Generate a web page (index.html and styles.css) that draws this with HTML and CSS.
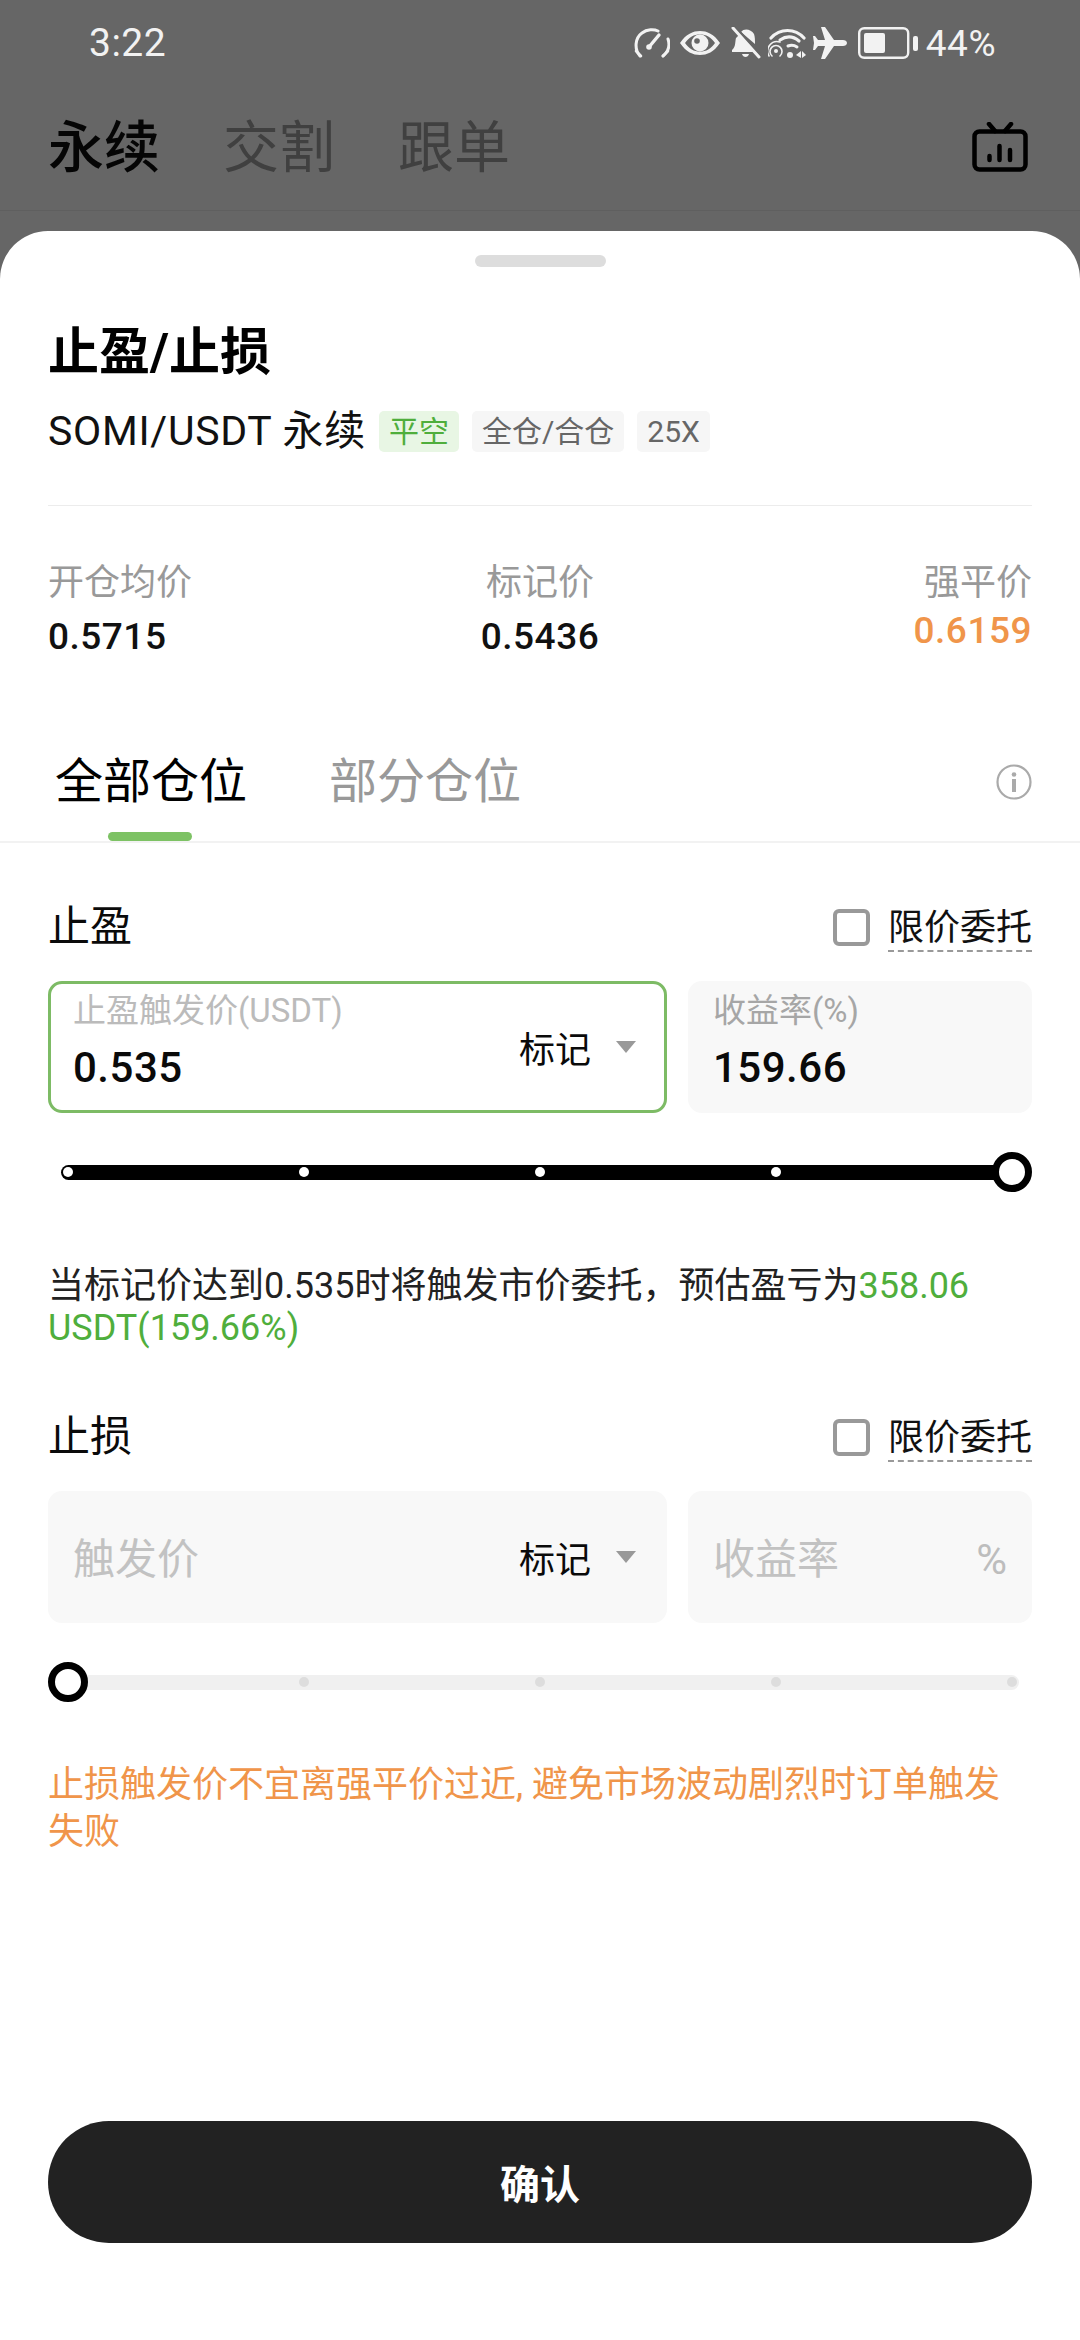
FILE: index.html
```html
<!DOCTYPE html>
<html>
<head>
  <meta charset="utf-8" />
  <title>止盈/止损</title>
  <link rel="stylesheet" href="styles.css">
</head>
<body>

<div class="page">

  <div class="backdrop">
    <div class="statusbar">
      <span class="clock">3:22</span>
      <div class="status-icons">
        <!-- speed gauge -->
        <svg class="ic-gauge" viewBox="0 0 36 32" fill="none" stroke="#f2f2f2" stroke-width="3" stroke-linecap="round">
          <path d="M6 29 C0 22 1 11 8 6 C13 2 20 2 24 4"/>
          <path d="M29 29 C35 24 36 18 34 12"/>
          <path d="M15 20 L25 8" stroke-width="3.4"/>
          <path d="M2 24 L7 29 M34 24 L29 29" stroke-width="2.6"/>
          <circle cx="15" cy="20" r="2.8" fill="#f2f2f2" stroke="none"/>
        </svg>
        <!-- eye -->
        <svg class="ic-eye" viewBox="0 0 40 24">
          <path fill="#f2f2f2" fill-rule="evenodd" d="M0 12 C6 3 13 0 20 0 C27 0 34 3 40 12 C34 21 27 24 20 24 C13 24 6 21 0 12 Z M5 12 C9 18 14 20.500 20 20.500 C26 20.500 31 18 35 12 C31 6 26 3.500 20 3.500 C14 3.500 9 6 5 12 Z"/>
          <circle cx="20" cy="12" r="8.500" fill="#f2f2f2"/>
          <circle cx="17" cy="10" r="2.800" fill="#666"/>
        </svg>
        <!-- muted bell -->
        <svg class="ic-bell" viewBox="0 0 30 32">
          <path fill="#f2f2f2" d="M8 8 L22 22 L24 25 L1 25 L1 23 C5 20 4 14 5 11 Z M10 5 C13 1 20 2 23 7 C24 10 24 13 24 17 Z M11 27 L18 27 C17 31 12 31 11 27 Z"/>
          <path d="M2 1 L28 30" stroke="#f2f2f2" stroke-width="3" stroke-linecap="round"/>
          <path d="M5 0 L30 28" stroke="#666" stroke-width="1.500"/>
        </svg>
        <!-- wifi with hotspot mark -->
        <svg class="ic-wifi" viewBox="0 0 38 32" fill="none" stroke="#f2f2f2" stroke-linecap="round">
          <path d="M3 11 C12 1 27 1 36 11" stroke-width="3.200"/>
          <path d="M12 13 C18 9 25 9 31 14" stroke-width="3.200"/>
          <path d="M20 19 C23 18 26 18 29 20" stroke-width="3"/>
          <circle cx="8" cy="24" r="2" fill="#f2f2f2" stroke="none"/>
          <path d="M4 29 A6 6 0 1 1 12 29 M1 29 A9.500 9.500 0 0 1 12 15" stroke-width="1.600"/>
          <circle cx="22" cy="28" r="3" fill="#f2f2f2" stroke="none"/>
          <path fill="#f2f2f2" stroke="none" d="M33 24 L33 31 L28 28 Z M34 24 L38 28 L34 31 Z"/>
        </svg>
        <!-- airplane -->
        <svg class="ic-plane" viewBox="0 0 34 32">
          <path fill="#f2f2f2" d="M34 16 C34 18 32 19 30 19 L21 19 L12 32 L8 32 L12 19 L5 19 L2 23 L0 23 L1 16 L0 9 L2 9 L5 13 L12 13 L8 0 L12 0 L21 13 L30 13 C32 13 34 14 34 16 Z"/>
        </svg>
        <!-- battery -->
        <svg class="ic-battery" viewBox="0 0 60 32">
          <rect x="1.200" y="1.200" width="49" height="29.600" rx="5" fill="none" stroke="#f2f2f2" stroke-width="2.400"/>
          <rect x="6" y="6" width="21" height="20" rx="2" fill="#f2f2f2"/>
          <rect x="55" y="9" width="5" height="15" rx="2" fill="#f2f2f2"/>
        </svg>
        <span class="battery-pct">44%</span>
      </div>
    </div>

    <div class="market-nav">
      <span class="market-tab current">永续</span>
      <span class="market-tab">交割</span>
      <span class="market-tab">跟单</span>
      <svg class="ic-tv" viewBox="0 0 56 50" fill="none" stroke="#000" stroke-width="4.500" stroke-linecap="round" stroke-linejoin="round">
        <rect x="2.500" y="9.500" width="51" height="38" rx="5"/>
        <path d="M17 2 L23 9 M39 2 L33 9"/>
        <path d="M17.500 34 V38 M27.500 24 V38 M38 28 V38"/>
      </svg>
    </div>
  </div>

  <div class="sheet">
    <div class="handle"></div>

    <div class="sheet-head">
      <h1 class="title">止盈/止损</h1>
      <div class="pair-row">
        <span class="pair">SOMI/USDT 永续</span>
        <span class="tag tag-green">平空</span>
        <span class="tag">全仓/合仓</span>
        <span class="tag">25X</span>
      </div>
      <div class="rule"></div>
      <div class="stats">
        <div class="stat">
          <div class="stat-label">开仓均价</div>
          <div class="stat-value">0.5715</div>
        </div>
        <div class="stat stat-mid">
          <div class="stat-label">标记价</div>
          <div class="stat-value">0.5436</div>
        </div>
        <div class="stat stat-end">
          <div class="stat-label">强平价</div>
          <div class="stat-value stat-liq">0.6159</div>
        </div>
      </div>
    </div>

    <div class="tabs">
      <span class="tab active">全部仓位</span>
      <span class="tab">部分仓位</span>
      <svg class="ic-info" viewBox="0 0 36 36">
        <circle cx="18" cy="18" r="16.500" fill="none" stroke="#aaa" stroke-width="2.200"/>
        <circle cx="18" cy="10.500" r="2.300" fill="#aaa"/>
        <rect x="16" y="15" width="4" height="13" fill="#aaa"/>
      </svg>
    </div>

    <div class="form">
      <div class="section-head">
        <span class="section-title">止盈</span>
        <label class="limit-check"><span class="checkbox"></span><span class="limit-text">限价委托</span></label>
      </div>
      <div class="inputs">
        <div class="field field-price focused">
          <div class="field-main">
            <div class="field-label light">止盈触发价(USDT)</div>
            <div class="field-value">0.535</div>
          </div>
          <div class="select"><span>标记</span><i class="caret"></i></div>
        </div>
        <div class="field field-rate">
          <div class="field-main">
            <div class="field-label">收益率(%)</div>
            <div class="field-value">159.66</div>
          </div>
        </div>
      </div>
      <div class="slider">
        <div class="track full">
          <i class="dot"></i><i class="dot"></i><i class="dot"></i><i class="dot"></i><i class="dot"></i>
        </div>
        <span class="thumb thumb-end"></span>
      </div>
      <p class="note">当标记价达到0.535时将触发市价委托，预估盈亏为<span class="green">358.06</span> <span class="green">USDT(159.66%)</span></p>

      <div class="section-head second">
        <span class="section-title">止损</span>
        <label class="limit-check"><span class="checkbox"></span><span class="limit-text">限价委托</span></label>
      </div>
      <div class="inputs">
        <div class="field field-price">
          <div class="placeholder">触发价</div>
          <div class="select"><span>标记</span><i class="caret"></i></div>
        </div>
        <div class="field field-rate">
          <div class="placeholder">收益率</div>
          <span class="percent">%</span>
        </div>
      </div>
      <div class="slider">
        <div class="track">
          <i class="dot"></i><i class="dot"></i><i class="dot"></i><i class="dot"></i><i class="dot"></i>
        </div>
        <span class="thumb thumb-start"></span>
      </div>
      <p class="warning">止损触发价不宜离强平价过近, 避免市场波动剧烈时订单触发失败</p>
    </div>

    <button class="confirm">确认</button>
  </div>

</div>

</body>
</html>
```

FILE: styles.css
```css
* {
  box-sizing: border-box;
}

html, body {
  margin: 0;
  padding: 0;
}

body {
  background: #666;
  font-family: Roboto, "Noto Sans CJK SC", sans-serif;
  color: #111;
}

.page {
  width: 1080px;
  height: 2340px;
  display: flex;
  flex-direction: column;
  overflow: hidden;
}

/* dimmed screen behind the sheet */
.backdrop {
  height: 231px;
  flex: none;
  background: #666;
}

.statusbar {
  height: 86px;
  padding: 0 84px 0 89px;
  display: flex;
  align-items: center;
  justify-content: space-between;
  color: #f2f2f2;
}

.clock {
  font-size: 39px;
  letter-spacing: 0.5px;
}

.status-icons {
  display: flex;
  align-items: center;
}

.status-icons svg {
  display: block;
  flex: none;
}

.ic-gauge { width: 36px; height: 32px; margin-right: 10px; }
.ic-eye { width: 40px; height: 24px; margin-right: 11px; }
.ic-bell { width: 30px; height: 32px; margin-right: 7px; }
.ic-wifi { width: 38px; height: 32px; margin-right: 7px; }
.ic-plane { width: 34px; height: 32px; margin-right: 11px; }
.ic-battery { width: 60px; height: 32px; margin-right: 8px; }

.battery-pct {
  font-size: 37px;
  letter-spacing: 0.5px;
}

.market-nav {
  height: 125px;
  padding: 0 52px 0 48px;
  display: flex;
  align-items: center;
  border-bottom: 1px solid #5f5f5f;
}

.market-tab {
  font-size: 56px;
  line-height: 70px;
  margin-right: 63px;
  color: #404040;
}

.market-tab.current {
  color: #050505;
  font-weight: 500;
}

.ic-tv {
  width: 56px;
  height: 50px;
  margin-left: auto;
  margin-top: -3px;
}

/* bottom sheet */
.sheet {
  flex: 1;
  background: #fff;
  border-radius: 48px 48px 0 0;
  display: flex;
  flex-direction: column;
}

.handle {
  width: 131px;
  height: 12px;
  margin: 24px auto 0;
  border-radius: 6px;
  background: #ddd;
}

.sheet-head {
  padding: 0 48px;
}

.title {
  margin: 54px 0 0;
  font-size: 51px;
  line-height: 64px;
  font-weight: 700;
  color: #000;
}

.pair-row {
  margin-top: 26px;
  height: 41px;
  display: flex;
  align-items: center;
}

.pair {
  font-size: 41px;
  line-height: 41px;
  color: #111;
  margin-right: 13px;
  letter-spacing: 0.7px;
}

.tag {
  height: 41px;
  padding: 0 10px;
  margin-right: 13px;
  border-radius: 5px;
  background: #f6f6f6;
  color: #666;
  font-size: 30px;
  line-height: 41px;
}

.tag-green {
  background: #e8f6e4;
  color: #4fae3c;
}

.rule {
  height: 1px;
  margin-top: 53px;
  background: #ececec;
}

.stats {
  margin-top: 55px;
  display: grid;
  grid-template-columns: 1fr auto 1fr;
}

.stat-mid {
  text-align: center;
}

.stat-end {
  text-align: right;
}

.stat-label {
  font-size: 36px;
  line-height: 44px;
  color: #999;
}

.stat-value {
  margin-top: 10px;
  font-size: 37px;
  line-height: 44px;
  color: #111;
  font-weight: 500;
  letter-spacing: 0.5px;
}

.stat-liq {
  margin-top: 4px;
  color: #f0954a;
}

.tabs {
  position: relative;
  margin-top: 93px;
  padding: 0 48px 29px 55px;
  display: flex;
  align-items: center;
  gap: 82px;
  border-bottom: 2px solid #f2f2f2;
}

.tab {
  position: relative;
  font-size: 48px;
  line-height: 60px;
  color: #999;
}

.tab.active {
  color: #000;
}

/* green bar sits on the tab strip's bottom line */
.tab.active::after {
  content: "";
  position: absolute;
  left: 53px;
  bottom: -29px;
  width: 84px;
  height: 9px;
  border-radius: 5px;
  background: #7dc264;
}

.ic-info {
  width: 36px;
  height: 36px;
  margin-left: auto;
}

.form {
  padding: 0 48px;
}

.section-head {
  margin-top: 62px;
  height: 44px;
  display: flex;
  align-items: center;
  justify-content: space-between;
}

.section-head.second {
  margin-top: 66px;
}

.section-title {
  font-size: 42px;
  line-height: 44px;
  color: #0a0a0a;
}

.limit-check {
  display: flex;
  align-items: center;
}

.checkbox {
  width: 37px;
  height: 37px;
  margin-right: 18px;
  border: 4px solid #999;
  border-radius: 6px;
}

.limit-text {
  font-size: 36px;
  line-height: 44px;
  color: #111;
  border-bottom: 2px dashed #999;
  margin-bottom: -4px;
}

.inputs {
  margin-top: 32px;
  display: flex;
  gap: 21px;
}

.field {
  height: 132px;
  display: flex;
  align-items: center;
  border-radius: 14px;
  background: #f8f8f8;
  padding: 0 25px;
}

.field-price {
  width: 619px;
  flex: none;
  padding-right: 31px;
}

.field-rate {
  flex: 1;
}

.field.focused {
  background: #fff;
  border: 3px solid #7dbb65;
  padding: 0 28px 0 22px;
}

.field-main {
  flex: 1;
  margin-bottom: 10px;
}

.field-label {
  font-size: 33px;
  line-height: 40px;
  color: #a6a6a6;
}

.field-label.light {
  color: #bbb;
}

.field-value {
  margin-top: 12px;
  font-size: 42px;
  line-height: 50px;
  font-weight: 500;
  letter-spacing: 0.5px;
  color: #0a0a0a;
}

.placeholder {
  flex: 1;
  padding-top: 5px;
  font-size: 42px;
  line-height: 50px;
  color: #c2c2c2;
}

.percent {
  padding-top: 5px;
  font-size: 42px;
  color: #bdbdbd;
}

.select {
  display: flex;
  align-items: center;
  font-size: 36px;
  line-height: 44px;
  color: #0a0a0a;
  margin-top: 8px;
}

.caret {
  width: 0;
  height: 0;
  margin-left: 25px;
  margin-top: -8px;
  border-left: 10px solid transparent;
  border-right: 10px solid transparent;
  border-top: 12px solid #999;
}

.slider {
  position: relative;
  margin-top: 39px;
  height: 40px;
  display: flex;
  align-items: center;
}

.track {
  width: 958px;
  height: 15px;
  margin-left: 13px;
  padding: 0 2px;
  border-radius: 8px;
  background: #f0f0f0;
  display: flex;
  align-items: center;
  justify-content: space-between;
}

.track.full {
  background: #000;
}

.dot {
  width: 10px;
  height: 10px;
  border-radius: 50%;
  background: #ddd;
}

.track.full .dot {
  background: #fff;
}

.thumb {
  position: absolute;
  top: 0;
  width: 40px;
  height: 40px;
  border-radius: 50%;
  border: 7px solid #000;
  background: #fff;
}

.thumb-start {
  left: 0;
}

.thumb-end {
  right: 0;
}

.note {
  margin: 73px 0 0;
  font-size: 36px;
  line-height: 42px;
  color: #222;
}

.green {
  color: #4fae3c;
}

.warning {
  margin: 60px 0 0;
  font-size: 36px;
  line-height: 47px;
  color: #f0954a;
}

.confirm {
  display: block;
  width: 984px;
  height: 122px;
  margin: auto 48px 97px;
  padding: 0;
  border: none;
  border-radius: 61px;
  background: #222;
  color: #fff;
  font-family: inherit;
  font-size: 40px;
  font-weight: 700;
}
```
